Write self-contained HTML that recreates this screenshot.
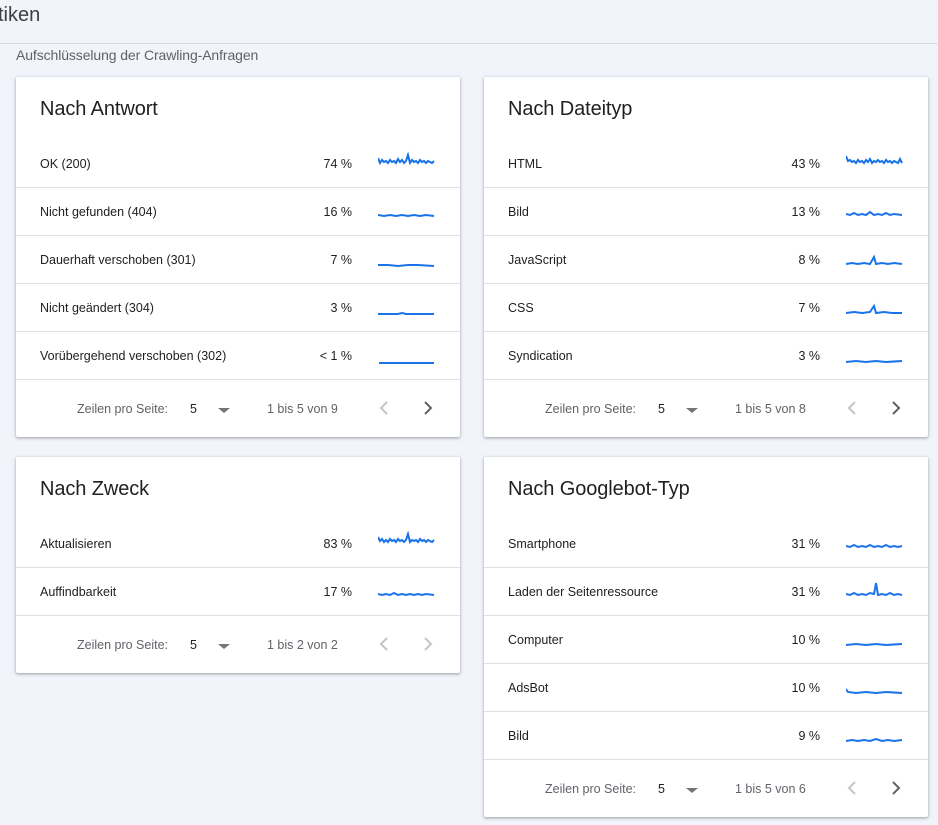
<!DOCTYPE html>
<html><head><meta charset="utf-8"><style>
*{box-sizing:border-box;margin:0;padding:0}
body{width:938px;height:825px;background:#f1f4fb;font-family:"Liberation Sans",Roboto,sans-serif;position:relative;overflow:hidden;color:#202124}
.top{position:absolute;left:0;top:0;width:938px;height:44px;border-bottom:1px solid #dadce0}
.top span{position:absolute;left:-2px;top:4px;font-size:20px;color:#3c4043;font-weight:500}
.sub{position:absolute;left:16px;top:47px;font-size:14px;color:#5f6368;letter-spacing:-0.1px}
.card{position:absolute;width:444px;background:#fff;border-radius:2px;box-shadow:0 1px 2px rgba(60,64,67,.3),0 1px 3px 1px rgba(60,64,67,.15)}
.card h2{font-weight:400;font-size:20px;height:63px;padding:21px 0 0 24px;color:#202124;letter-spacing:-0.1px}
.row{position:relative;height:48px;border-bottom:1px solid #e0e0e0;font-size:12.5px}
.row .l{position:absolute;left:24px;top:17px}
.row .p{position:absolute;right:108px;top:17px}
.row svg{position:absolute;left:362px;top:11px}
.foot{position:relative;height:57px;font-size:12.5px;color:#5f6368}
.foot .a{position:absolute;left:61px;top:22px}
.foot .n{position:absolute;left:174px;top:22px;color:#202124}
.foot .d{position:absolute;left:202px;top:28px;border-left:6px solid transparent;border-right:6px solid transparent;border-top:5px solid #757575}
.foot .r{position:absolute;left:251px;top:22px}
.foot svg{position:absolute;top:20px}
polyline{stroke-width:2}
</style></head><body>
<div class="top"><span>tiken</span></div>
<div class="sub">Aufschlüsselung der Crawling-Anfragen</div>

<div class="card" style="left:16px;top:77px">
<h2>Nach Antwort</h2>
<div class="row"><span class="l">OK (200)</span><span class="p">74 %</span><svg width="58" height="28"><polyline fill="none" stroke="#1a73e8" points="0,7 2,12 4,9 6,11 8,10 10,12 12,9 14,11 16,10 18,12 20,8 22,11 24,9 26,12 28,10 30,4 32,12 34,9 36,11 38,10 40,12 42,9 44,11 46,10 48,12 50,10 52,11 54,12 56,10"/></svg></div>
<div class="row"><span class="l">Nicht gefunden (404)</span><span class="p">16 %</span><svg width="58" height="28"><polyline fill="none" stroke="#1a73e8" points="0,16 6,17 12,16 18,17 24,16 30,17 36,16 42,17 48,16 56,17"/></svg></div>
<div class="row"><span class="l">Dauerhaft verschoben (301)</span><span class="p">7 %</span><svg width="58" height="28"><polyline fill="none" stroke="#1a73e8" points="0,18 10,18 20,19 30,18 40,18 56,19"/></svg></div>
<div class="row"><span class="l">Nicht geändert (304)</span><span class="p">3 %</span><svg width="58" height="28"><polyline fill="none" stroke="#1a73e8" points="0,19 20,19 24,18 28,19 56,19"/></svg></div>
<div class="row"><span class="l">Vorübergehend verschoben (302)</span><span class="p">&lt; 1 %</span><svg width="58" height="28"><polyline fill="none" stroke="#1a73e8" points="1,20 56,20"/></svg></div>
<div class="foot"><span class="a">Zeilen pro Seite:</span><span class="n">5</span><span class="d"></span><span class="r">1 bis 5 von 9</span><svg style="left:362px" width="12" height="16"><polyline fill="none" stroke="#c4c4c4" points="9,2 3,8 9,14"/></svg><svg style="left:406px" width="12" height="16"><polyline fill="none" stroke="#5f6368" points="3,2 9,8 3,14"/></svg></div>
</div>

<div class="card" style="left:484px;top:77px">
<h2>Nach Dateityp</h2>
<div class="row"><span class="l">HTML</span><span class="p">43 %</span><svg width="58" height="28"><polyline fill="none" stroke="#1a73e8" points="0,5 2,10 4,9 6,11 8,10 10,12 12,9 14,11 16,10 18,12 20,9 22,11 24,8 26,12 28,10 30,11 32,9 34,11 36,10 38,12 40,9 42,11 44,10 46,12 48,10 50,11 52,12 54,8 56,12"/></svg></div>
<div class="row"><span class="l">Bild</span><span class="p">13 %</span><svg width="58" height="28"><polyline fill="none" stroke="#1a73e8" points="0,15 4,16 8,14 12,16 16,15 20,16 24,13 28,16 32,15 36,16 40,14 44,16 48,15 56,16"/></svg></div>
<div class="row"><span class="l">JavaScript</span><span class="p">8 %</span><svg width="58" height="28"><polyline fill="none" stroke="#1a73e8" points="0,17 6,16 12,17 18,16 24,17 28,10 30,17 36,16 42,17 48,16 56,17"/></svg></div>
<div class="row"><span class="l">CSS</span><span class="p">7 %</span><svg width="58" height="28"><polyline fill="none" stroke="#1a73e8" points="0,18 8,17 16,18 24,17 28,11 30,18 38,17 46,18 56,18"/></svg></div>
<div class="row"><span class="l">Syndication</span><span class="p">3 %</span><svg width="58" height="28"><polyline fill="none" stroke="#1a73e8" points="0,19 10,18 20,19 30,18 40,19 56,18"/></svg></div>
<div class="foot"><span class="a">Zeilen pro Seite:</span><span class="n">5</span><span class="d"></span><span class="r">1 bis 5 von 8</span><svg style="left:362px" width="12" height="16"><polyline fill="none" stroke="#c4c4c4" points="9,2 3,8 9,14"/></svg><svg style="left:406px" width="12" height="16"><polyline fill="none" stroke="#5f6368" points="3,2 9,8 3,14"/></svg></div>
</div>

<div class="card" style="left:16px;top:457px">
<h2>Nach Zweck</h2>
<div class="row"><span class="l">Aktualisieren</span><span class="p">83 %</span><svg width="58" height="28"><polyline fill="none" stroke="#1a73e8" points="0,6 2,10 4,8 6,11 8,9 10,11 12,8 14,10 16,9 18,11 20,8 22,10 24,9 26,11 28,9 30,3 32,11 34,9 36,10 38,9 40,11 42,8 44,10 46,9 48,11 50,9 52,10 54,11 56,9"/></svg></div>
<div class="row"><span class="l">Auffindbarkeit</span><span class="p">17 %</span><svg width="58" height="28"><polyline fill="none" stroke="#1a73e8" points="0,15 4,16 8,15 12,16 16,14 20,16 24,15 28,16 32,15 36,16 40,15 44,16 48,15 56,16"/></svg></div>
<div class="foot"><span class="a">Zeilen pro Seite:</span><span class="n">5</span><span class="d"></span><span class="r">1 bis 2 von 2</span><svg style="left:362px" width="12" height="16"><polyline fill="none" stroke="#c4c4c4" points="9,2 3,8 9,14"/></svg><svg style="left:406px" width="12" height="16"><polyline fill="none" stroke="#c4c4c4" points="3,2 9,8 3,14"/></svg></div>
</div>

<div class="card" style="left:484px;top:457px">
<h2>Nach Googlebot-Typ</h2>
<div class="row"><span class="l">Smartphone</span><span class="p">31 %</span><svg width="58" height="28"><polyline fill="none" stroke="#1a73e8" points="0,15 4,16 8,14 12,16 16,15 20,16 24,14 28,16 32,15 36,16 40,14 44,16 48,15 52,16 56,15"/></svg></div>
<div class="row"><span class="l">Laden der Seitenressource</span><span class="p">31 %</span><svg width="58" height="28"><polyline fill="none" stroke="#1a73e8" points="0,15 4,16 8,14 12,16 16,15 20,16 24,14 28,15 30,4 32,16 36,15 40,16 44,14 48,16 52,15 56,16"/></svg></div>
<div class="row"><span class="l">Computer</span><span class="p">10 %</span><svg width="58" height="28"><polyline fill="none" stroke="#1a73e8" points="0,18 10,17 20,18 30,17 40,18 56,17"/></svg></div>
<div class="row"><span class="l">AdsBot</span><span class="p">10 %</span><svg width="58" height="28"><polyline fill="none" stroke="#1a73e8" points="0,14 2,17 10,18 20,17 30,18 40,17 56,18"/></svg></div>
<div class="row"><span class="l">Bild</span><span class="p">9 %</span><svg width="58" height="28"><polyline fill="none" stroke="#1a73e8" points="0,18 6,17 12,18 18,17 24,18 30,16 36,18 42,17 48,18 56,17"/></svg></div>
<div class="foot"><span class="a">Zeilen pro Seite:</span><span class="n">5</span><span class="d"></span><span class="r">1 bis 5 von 6</span><svg style="left:362px" width="12" height="16"><polyline fill="none" stroke="#c4c4c4" points="9,2 3,8 9,14"/></svg><svg style="left:406px" width="12" height="16"><polyline fill="none" stroke="#5f6368" points="3,2 9,8 3,14"/></svg></div>
</div>
</body></html>
